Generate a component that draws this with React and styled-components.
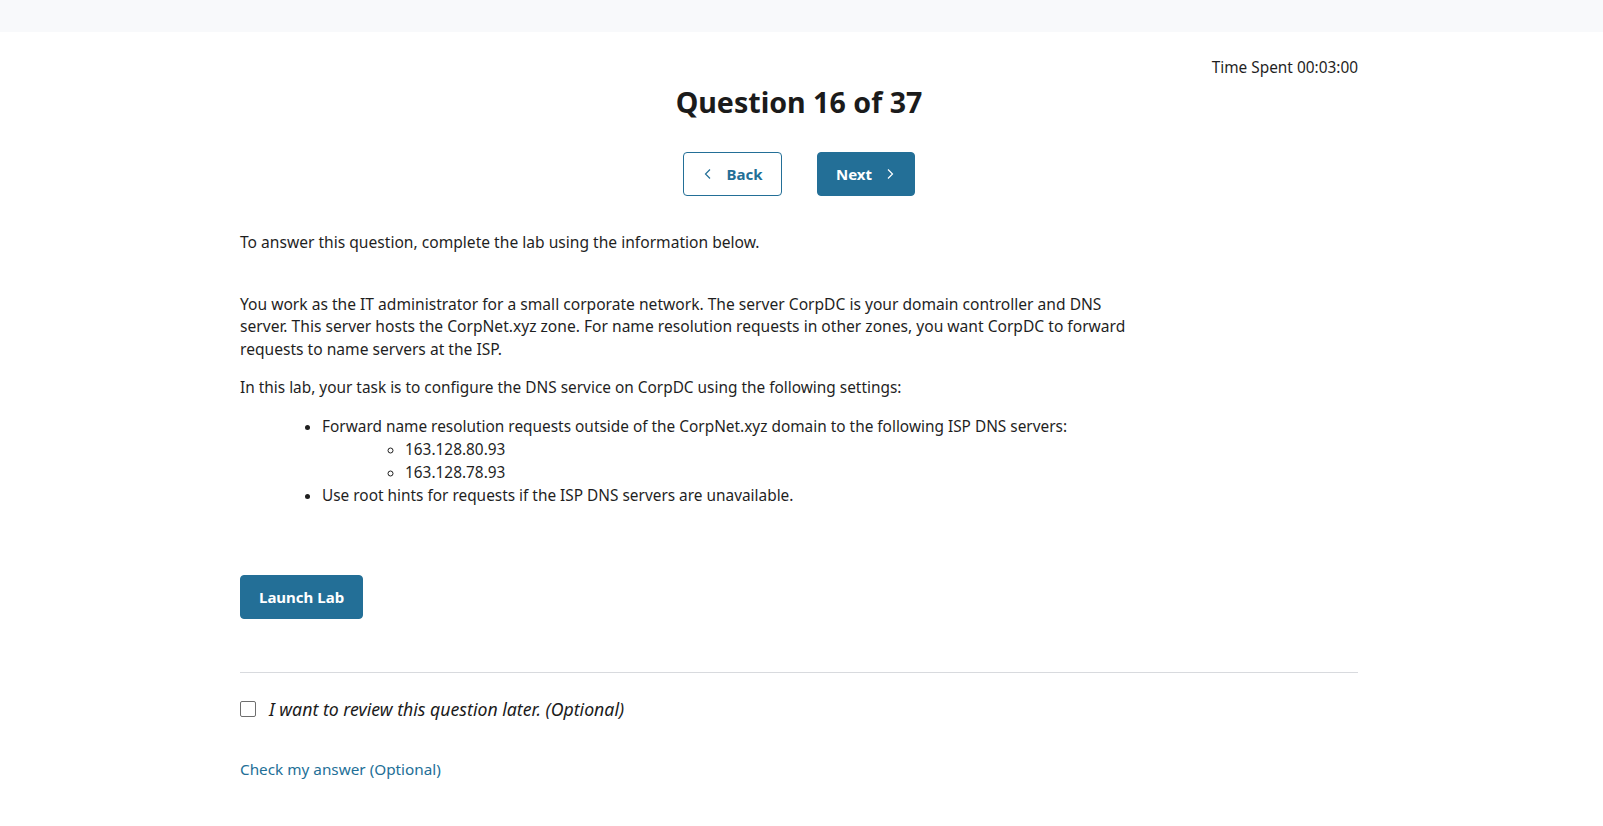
import React, { useState } from 'react';
import styled, { createGlobalStyle } from 'styled-components';

const GlobalStyle = createGlobalStyle`
  body {
    margin: 0;
    background: #ffffff;
    font-family: "Noto Sans", "Open Sans", sans-serif;
    color: #1f1f1f;
  }
`;

const TopBar = styled.div`
  height: 32px;
  background: #f8f9fb;
`;

const Page = styled.div`
  padding-right: 5px;
`;

const Main = styled.main`
  max-width: 1118px;
  margin: 0 auto;
  padding: 25px 0 40px;
`;

const TimeSpent = styled.div`
  text-align: right;
  font-size: 15.4px;
  line-height: 22px;
  color: #1f1f1f;
`;

const Title = styled.h1`
  margin: 4px 0 0;
  text-align: center;
  font-size: 28.6px;
  line-height: 38px;
  font-weight: 700;
  color: #1b1b1b;
`;

const NavRow = styled.div`
  display: flex;
  justify-content: center;
  gap: 35px;
  margin-top: 31px;
`;

const Button = styled.button`
  display: inline-flex;
  align-items: center;
  justify-content: center;
  gap: 12px;
  height: 44px;
  min-width: ${(p) => p.$width || 98}px;
  padding: 0 18px;
  border-radius: 4px;
  border: 1px solid #236f97;
  background: ${(p) => (p.$outline ? '#ffffff' : '#236f97')};
  color: ${(p) => (p.$outline ? '#236f97' : '#ffffff')};
  font-family: inherit;
  font-size: 15px;
  font-weight: 700;
  cursor: pointer;
  box-sizing: border-box;
`;

const Chevron = styled.svg`
  width: 12px;
  height: 12px;
`;

const Body = styled.div`
  max-width: 900px;
  margin-top: 35px;
  font-size: 15.6px;
  line-height: 22.5px;
  color: #1f1f1f;
`;

const Para = styled.p`
  margin: ${(p) => p.$top || 0}px 0 0;
  font-size: ${(p) => (p.$small ? '15.4px' : 'inherit')};
`;

const List = styled.ul`
  margin: 15px 0 0;
  padding-left: 82px;
  list-style: ${(p) => (p.$sub ? 'circle' : 'disc')};
  font-size: 15.4px;
  line-height: 23.2px;

  & & {
    margin: 0;
    padding-left: 83px;
  }
`;

const LaunchWrap = styled.div`
  margin-top: 68px;
`;

const Divider = styled.hr`
  margin: 53px 0 0;
  border: none;
  border-top: 1px solid #d8dade;
`;

const ReviewRow = styled.label`
  display: flex;
  align-items: center;
  gap: 13px;
  margin-top: 24px;
  font-size: 17.7px;
  line-height: 24px;
  font-style: italic;
  color: #1b1b1b;
  cursor: pointer;
`;

const Box = styled.span`
  width: 16px;
  height: 16px;
  box-sizing: border-box;
  border: 1px solid #6e6e6e;
  border-radius: 2px;
  background: ${(p) => (p.$checked ? '#236f97' : '#fff')};
`;

const CheckLink = styled.a`
  display: inline-block;
  margin-top: 37px;
  font-size: 15.3px;
  line-height: 22px;
  color: #236f97;
  text-decoration: none;
  cursor: pointer;
`;

const Left = () => (
  <Chevron viewBox="0 0 12 12" fill="none" stroke="currentColor" strokeWidth="1.2">
    <path d="M8 1.5L3.5 6 8 10.5" />
  </Chevron>
);

const Right = () => (
  <Chevron viewBox="0 0 12 12" fill="none" stroke="currentColor" strokeWidth="1.2">
    <path d="M4 1.5L8.5 6 4 10.5" />
  </Chevron>
);

export default function App() {
  const [review, setReview] = useState(false);

  return (
    <>
      <GlobalStyle />
      <TopBar />
      <Page>
        <Main>
          <TimeSpent>Time Spent 00:03:00</TimeSpent>
          <Title>Question 16 of 37</Title>
          <NavRow>
            <Button $outline $width={99}>
              <Left />
              Back
            </Button>
            <Button>
              Next
              <Right />
            </Button>
          </NavRow>

          <Body>
            <Para>To answer this question, complete the lab using the information below.</Para>
            <Para $top={39}>
              You work as the IT administrator for a small corporate network. The server CorpDC is your
              domain controller and DNS server. This server hosts the CorpNet.xyz zone. For name resolution
              requests in other zones, you want CorpDC to forward requests to name servers at the ISP.
            </Para>
            <Para $top={17} $small>
              In this lab, your task is to configure the DNS service on CorpDC using the following settings:
            </Para>
            <List>
              <li>
                Forward name resolution requests outside of the CorpNet.xyz domain to the following ISP DNS
                servers:
                <List $sub>
                  <li>163.128.80.93</li>
                  <li>163.128.78.93</li>
                </List>
              </li>
              <li>Use root hints for requests if the ISP DNS servers are unavailable.</li>
            </List>
          </Body>

          <LaunchWrap>
            <Button $width={123}>Launch Lab</Button>
          </LaunchWrap>

          <Divider />

          <ReviewRow onClick={() => setReview(!review)}>
            <Box $checked={review} />
            I want to review this question later. (Optional)
          </ReviewRow>

          <CheckLink>Check my answer (Optional)</CheckLink>
        </Main>
      </Page>
    </>
  );
}
